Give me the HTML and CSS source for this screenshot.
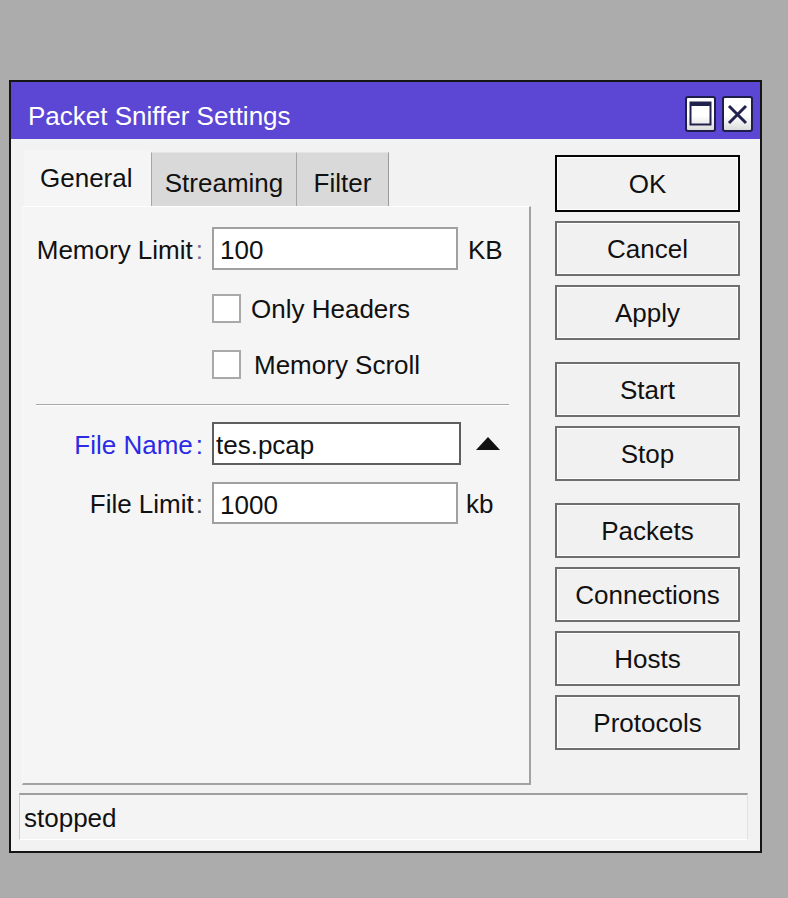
FILE: index.html
```html
<!DOCTYPE html>
<html>
<head>
<meta charset="utf-8">
<link rel="stylesheet" href="styles.css">
</head>
<body>
<div class="window">
  <div class="titlebar">
    <span class="title">Packet Sniffer Settings</span>
    <div class="tbtns">
      <span class="tbtn">
        <svg width="27" height="32" viewBox="0 0 27 32"><rect x="3.5" y="4.5" width="20" height="22" fill="none" stroke="#22224f" stroke-width="2"/><rect x="3.5" y="4" width="20" height="4" fill="#22224f"/></svg>
      </span>
      <span class="tbtn">
        <svg width="27" height="32" viewBox="0 0 27 32"><path d="M5 8 L22 25 M22 8 L5 25" stroke="#22224f" stroke-width="3" fill="none"/></svg>
      </span>
    </div>
  </div>
  <div class="body">
    <div class="main">
      <div class="left">
        <div class="tabs">
          <div class="tab active">General</div>
          <div class="tab streaming">Streaming</div>
          <div class="tab filter">Filter</div>
        </div>
        <div class="panel">
          <div class="row first">
            <div class="label">Memory Limit<span class="colon">:</span></div>
            <div class="input">100</div>
            <span class="unit">KB</span>
          </div>
          <div class="check first-check">
            <span class="box"></span><span class="check-text">Only Headers</span>
          </div>
          <div class="check second-check">
            <span class="box"></span><span class="check-text scroll">Memory Scroll</span>
          </div>
          <div class="separator"></div>
          <div class="row file-name">
            <div class="label blue">File Name<span class="colon blue">:</span></div>
            <div class="input dark">tes.pcap</div>
            <svg class="arrow" width="24" height="13" viewBox="0 0 24 13"><polygon points="12,0 24,13 0,13" fill="#111"/></svg>
          </div>
          <div class="row file-limit">
            <div class="label">File Limit<span class="colon plain">:</span></div>
            <div class="input">1000</div>
            <span class="unit kb">kb</span>
          </div>
        </div>
      </div>
      <div class="buttons">
        <div class="btn ok">OK</div>
        <div class="btn">Cancel</div>
        <div class="btn">Apply</div>
        <div class="btn group">Start</div>
        <div class="btn">Stop</div>
        <div class="btn group">Packets</div>
        <div class="btn">Connections</div>
        <div class="btn">Hosts</div>
        <div class="btn">Protocols</div>
      </div>
    </div>
    <div class="status"><span class="status-text">stopped</span></div>
  </div>
</div>
</body>
</html>
```

FILE: styles.css
```css
* { box-sizing: border-box; }
html, body {
  margin: 0;
  padding: 0;
  background: #acacac;
  width: 788px;
  height: 898px;
  overflow: hidden;
  font-family: "Liberation Sans", Arial, sans-serif;
  font-size: 26px;
  color: #111;
}
.window {
  margin: 80px 0 0 9px;
  width: 753px;
  height: 773px;
  border: 2px solid #151515;
  background: #f2f2f2;
  display: flex;
  flex-direction: column;
}
.titlebar {
  height: 57px;
  background: #5c46d4;
  display: flex;
  align-items: flex-start;
  justify-content: space-between;
  padding-left: 17px;
  padding-right: 7px;
}
.title {
  color: #fff;
  line-height: 30px;
  margin-top: 19px;
}
.tbtns {
  display: flex;
  gap: 6px;
  margin-top: 14px;
}
.tbtn {
  width: 31px;
  height: 36px;
  border: 2px solid #1e1e4a;
  border-radius: 3px;
  background: linear-gradient(#ffffff 55%, #dcdcdc);
  display: flex;
}
.tbtn svg { display: block; }
.body {
  flex: 1;
  display: flex;
  flex-direction: column;
}
.main {
  display: flex;
  padding: 11px 0 0 11px;
}
.left {
  width: 509px;
  display: flex;
  flex-direction: column;
}
.tabs {
  display: flex;
  align-items: flex-end;
  height: 56px;
  padding-left: 2px;
}
.tab {
  line-height: 30px;
  white-space: nowrap;
}
.tab.active {
  width: 127px;
  height: 56px;
  padding: 13px 0 0 16px;
  background: #f5f5f5;
}
.tab.streaming, .tab.filter {
  height: 54px;
  padding-top: 15px;
  background: #d9d9d9;
  border-left: 1px solid #a6a6a6;
  border-top: 1px solid #e4e4e4;
  text-align: center;
}
.tab.streaming { width: 145px; }
.tab.filter { width: 93px; border-right: 1px solid #9a9a9a; }
.panel {
  height: 579px;
  background: #f5f5f5;
  border-top: 1px solid #ffffff;
  border-left: 1px solid #f8f8f8;
  border-right: 2px solid #a2a2a2;
  border-bottom: 2px solid #a2a2a2;
}
.row {
  display: flex;
  align-items: center;
  height: 43px;
}
.row.first { margin-top: 20px; }
.row.file-name { margin-top: 16px; }
.row.file-limit { margin-top: 17px; height: 42px; }
.label, .unit {
  padding-top: 3px;
}
.label {
  width: 189px;
  text-align: right;
  padding-right: 9px;
  white-space: nowrap;
}
.colon {
  margin-left: 3px;
  color: #7d6f90;
}
.colon.plain { margin-left: 2px; color: #444; }
.blue { color: #2b2be6; }
.colon.blue { color: #2b2be6; }
.input {
  width: 246px;
  height: 100%;
  background: #ffffff;
  border: 2px solid #a0a0a0;
  padding: 2px 0 0 6px;
  line-height: 38px;
}
.input.dark {
  width: 249px;
  border-color: #5e5e5e;
  padding-left: 2px;
}
.unit { margin-left: 10px; }
.unit.kb { margin-left: 8px; }
.arrow { margin-left: 15px; display: block; }
.check {
  display: flex;
  align-items: center;
  padding-left: 189px;
  height: 29px;
}
.first-check { margin-top: 24px; }
.second-check { margin-top: 27px; }
.box {
  width: 29px;
  height: 29px;
  background: #ffffff;
  border: 2px solid #a9a9a9;
  flex: none;
}
.check-text { margin-left: 10px; padding-top: 2px; }
.check-text.scroll { margin-left: 13px; }
.separator {
  margin: 25px 0 0 13px;
  width: 473px;
  height: 2px;
  border-top: 1px solid #a8a8a8;
  border-bottom: 1px solid #ffffff;
}
.buttons {
  width: 185px;
  margin-left: 24px;
  margin-top: 5px;
  display: flex;
  flex-direction: column;
}
.btn {
  height: 55px;
  margin-top: 9px;
  border: 2px solid #6f6f6f;
  box-shadow: inset 0 0 0 1px #ffffff;
  background: #f1f1f1;
  display: flex;
  align-items: center;
  justify-content: center;
  white-space: nowrap;
  padding-top: 1px;
}
.btn.ok {
  height: 57px;
  margin-top: 0;
  border: 2px solid #050505;
}
.btn.group { margin-top: 22px; }
.status {
  margin: 8px 12px 0 8px;
  height: 47px;
  border-top: 2px solid #9e9e9e;
  border-left: 1px solid #c9c9c9;
  border-right: 1px solid #e2e2e2;
  border-bottom: 1px solid #ffffff;
  background: #f4f4f4;
  display: flex;
  align-items: center;
  padding: 2px 0 0 4px;
}
```
